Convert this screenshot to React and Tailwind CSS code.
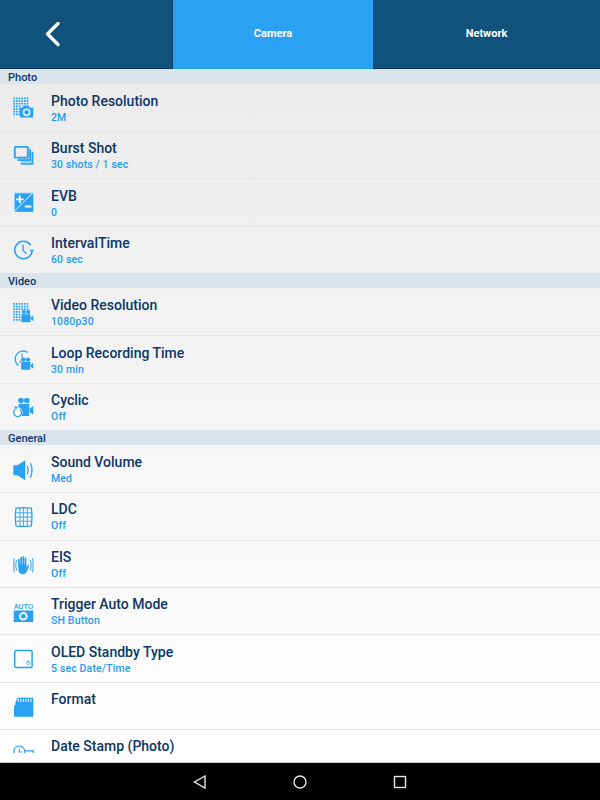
import React from 'react';

const BLUE = '#2ba1f3';

// dotted sensor grid used by the two resolution icons
const Grid = ({ x, y, rows }) => {
  const dots = [];
  for (let r = 0; r < rows; r++) {
    for (let c = 0; c < 6; c++) {
      if (r >= 3 && c >= 3) continue;
      dots.push(<rect key={`${r}-${c}`} x={x + c * 2.67} y={y + r * 2.67} width="1.7" height="1.7" fill={BLUE} />);
    }
  }
  return <>{dots}</>;
};

const MovieCam = ({ x, y, s = 1 }) => (
  <g transform={`translate(${x} ${y}) scale(${s})`} fill={BLUE}>
    <circle cx="3.2" cy="2.2" r="2.2" />
    <circle cx="7.8" cy="2.2" r="2.2" />
    <rect x="0.6" y="4.4" width="9.6" height="8.4" rx="0.5" />
    <path d="M10.6 7.6 13.2 5.4v6.4l-2.6-2z" />
  </g>
);

const icons = {
  photoRes: (
    <>
      <Grid x={0.3} y={1.5} rows={7} />
      <path fill={BLUE} fillRule="evenodd" d="M7 11.4h2.4l1.1-1.9h5l1.1 1.9h3.7v10.1H7zM13.6 12.4a3.9 3.9 0 1 0 0 7.8 3.9 3.9 0 0 0 0-7.8z" />
      <circle cx="13.6" cy="16.3" r="2.2" fill={BLUE} />
    </>
  ),
  burst: (
    <>
      <path d="M15 5h2.6v12.4H5V15H15z" fill="#9ed3f8" />
      <path d="M18 8h2v13H8v-3h10z" fill="#9ed3f8" />
      <rect x="1.8" y="3.8" width="13" height="10.8" rx="0.6" fill="none" stroke={BLUE} strokeWidth="1.8" />
      <path d="M17.2 6.5v10.6H4.5" fill="none" stroke={BLUE} strokeWidth="1.6" />
      <path d="M19.6 9v12H7.5" fill="none" stroke={BLUE} strokeWidth="1.6" />
    </>
  ),
  evb: (
    <>
      <rect x="1" y="2.5" width="19.3" height="19.3" fill="#a5d6f9" />
      <path fill={BLUE} d="M1.6 21.8 20.3 3.2v18.6z" />
      <path fill={BLUE} d="M1.9 3.4h16.4L1.9 20z" />
      <path fill="#fff" d="M5.8 5.6h1.9v2.8h2.8v1.9H7.7v2.8H5.8v-2.8H3V8.4h2.8zM11.8 15.6h6.6v1.9h-6.6z" />
    </>
  ),
  interval: (
    <>
      <path d="M19.2 12.6A8.7 8.7 0 1 1 17.2 6.4" fill="none" stroke={BLUE} strokeWidth="1.6" strokeLinecap="round" />
      <path d="M10 6.4v6l3.6 3.3" fill="none" stroke={BLUE} strokeWidth="1.4" />
      <path d="M16.4 11.8h4.6l-2.3 3z" fill={BLUE} />
    </>
  ),
  videoRes: (
    <>
      <Grid x={0.3} y={3} rows={7} />
      <MovieCam x={7.8} y={10} s={0.95} />
    </>
  ),
  loop: (
    <>
      <path d="M5.6 18.6A7.9 7.9 0 1 1 14.6 5.4" fill="none" stroke={BLUE} strokeWidth="1.3" />
      <path d="M9 6.6v6.2L6.2 15.6" fill="none" stroke={BLUE} strokeWidth="1.1" />
      <MovieCam x={7.6} y={10.5} s={0.95} />
    </>
  ),
  cyclic: (
    <>
      <g fill={BLUE}>
        <circle cx="8" cy="5.5" r="2.8" />
        <circle cx="13.8" cy="5.5" r="2.8" />
        <rect x="5.5" y="9" width="10.8" height="12" rx="0.5" />
        <path d="M16.8 13.4 20.3 11v8.6l-3.5-2.4z" />
      </g>
      <circle cx="4.6" cy="17.6" r="5" fill="#f7f7f7" />
      <path d="M2.2 14.6a3.9 3.9 0 1 0 4.8 0" fill="none" stroke={BLUE} strokeWidth="1.3" />
      <circle cx="3" cy="12.6" r="1.4" fill={BLUE} />
    </>
  ),
  sound: (
    <>
      <path fill={BLUE} d="M0.3 8.3h4L12.3 3.3v20l-8-5H0.3z" />
      <path d="M14.4 9.3c1.1 2.6 1.1 5.4 0 8M17.4 6.3c2 4.4 2 9.8 0 14.4" fill="none" stroke={BLUE} strokeWidth="1.3" />
    </>
  ),
  ldc: (
    <>
      <path d="M3 4.2c5-.7 10.3-.7 15.3 0 .8 5.1.8 12 0 17.6-5 .7-10.3.7-15.3 0-.8-5.6-.8-12.5 0-17.6z" fill="none" stroke={BLUE} strokeWidth="1.3" />
      <path d="M7 4v18M10.6 3.8v18.4M14.3 4v18M2.4 8.8h16.5M2.2 13h17M2.4 17.2h16.5" stroke={BLUE} strokeWidth="0.9" fill="none" />
    </>
  ),
  eis: (
    <>
      <path fill={BLUE} d="M6.4 13V7.4a.9.9 0 0 1 1.7 0V12h.5V5.4a.9.9 0 0 1 1.7 0V12h.5V4.7a.9.9 0 0 1 1.7 0V12h.5V6a.9.9 0 0 1 1.7 0v8.4c0 .5.4.6.7.2l.8-1.4c.5-.8 1.6-.2 1.2.7l-1.8 4.6c-.7 2-2.2 3.7-4.500 3.7-3 0-4.3-2-4.3-4.5z" transform="translate(-1.3 0)" />
      <path d="M3.7 8c-1.3 3.4-1.3 7.2 0 10.5M1.3 6.2c-.8 4.8-.8 9.2 0 14.2M17.2 8c1.3 3.4 1.3 7.2 0 10.5M19.5 6.2c.8 4.8.8 9.2 0 14.2" fill="none" stroke={BLUE} strokeWidth="1" />
    </>
  ),
  auto: (
    <>
      <text x="10.5" y="9.500" textAnchor="middle" fontSize="7.6" fontWeight="500" fill={BLUE} fontFamily="Roboto, sans-serif">AUTO</text>
      <path fill={BLUE} fillRule="evenodd" d="M0.7 11.6h19.6V23H0.7zM10.3 13a4.3 4.3 0 1 0 0 8.6 4.3 4.3 0 0 0 0-8.6z" />
      <circle cx="10.3" cy="17.3" r="2.4" fill={BLUE} />
    </>
  ),
  oled: (
    <>
      <rect x="1.7" y="4.4" width="17.4" height="17.2" rx="1.4" fill="none" stroke={BLUE} strokeWidth="1.5" />
      <circle cx="15.3" cy="16.9" r="1.7" fill="none" stroke={BLUE} strokeWidth="0.7" />
      <path d="M15.3 14.6v2.3" stroke={BLUE} strokeWidth="0.7" />
    </>
  ),
  format: (
    <>
      <path fill={BLUE} d="M1 22.8V12l1.4-1.6V8.600L4.5 3.8h15.8v19z" />
      <path stroke="#fff" strokeWidth="1.1" d="M5.4 5v2.8M7.9 5v2.8M10.4 5v2.8M12.9 5v2.8M15.4 5v2.8M17.9 5v2.8" fill="none" />
    </>
  ),
  stamp: (
    <>
      <circle cx="6.3" cy="10.5" r="5.4" fill="none" stroke={BLUE} strokeWidth="1.2" />
      <path d="M6.3 7.4v3.6h2.9" fill="none" stroke={BLUE} strokeWidth="1.1" />
      <path d="M12 9.8h8.3v5" fill="none" stroke={BLUE} strokeWidth="1.3" />
    </>
  ),
};

const sections = [
  {
    title: 'Photo',
    items: [
      { icon: 'photoRes', name: 'Photo Resolution', value: '2M' },
      { icon: 'burst', name: 'Burst Shot', value: '30 shots / 1 sec' },
      { icon: 'evb', name: 'EVB', value: '0' },
      { icon: 'interval', name: 'IntervalTime', value: '60 sec' },
    ],
  },
  {
    title: 'Video',
    items: [
      { icon: 'videoRes', name: 'Video Resolution', value: '1080p30' },
      { icon: 'loop', name: 'Loop Recording Time', value: '30 min' },
      { icon: 'cyclic', name: 'Cyclic', value: 'Off' },
    ],
  },
  {
    title: 'General',
    items: [
      { icon: 'sound', name: 'Sound Volume', value: 'Med' },
      { icon: 'ldc', name: 'LDC', value: 'Off' },
      { icon: 'eis', name: 'EIS', value: 'Off' },
      { icon: 'auto', name: 'Trigger Auto Mode', value: 'SH Button' },
      { icon: 'oled', name: 'OLED Standby Type', value: '5 sec Date/Time' },
      { icon: 'format', name: 'Format', value: '' },
      { icon: 'stamp', name: 'Date Stamp (Photo)', value: '', cut: true },
    ],
  },
];

// the last row runs under the nav bar: only the top of its icon is drawn
const SettingRow = ({ icon, name, value, cut }) => (
  <div className={`flex shrink-0 border-t border-[#e3e5e6] pl-[13px] first:border-transparent ${cut ? 'h-[33px]' : 'h-[47.4px]'}`}>
    <svg className={`mt-[11px] w-[24px] shrink-0 ${cut ? 'h-[12px]' : 'h-[24px]'}`} viewBox={cut ? '0 0 24 12' : '0 0 24 24'}>
      {icons[icon]}
    </svg>
    <div className="ml-[14px] flex flex-col pt-[7.2px]">
      <span className="text-[14px] leading-[18px] font-medium text-[#0c3768]">{name}</span>
      {value && <span className="mt-[1px] text-[10.5px] leading-[14px] font-medium tracking-[0.15px] text-[#1f9bf0]">{value}</span>}
    </div>
  </div>
);

const App = () => {
  return (
    <div className="flex h-[800px] w-[600px] flex-col overflow-hidden bg-black font-['Roboto',sans-serif]">
      {/* Top tabs */}
      <header className="flex h-[69px] shrink-0 bg-[#11527d]">
        <div className="flex w-[173px] items-center border-r border-b border-r-[#0e3d63] border-b-[#0b3563] pl-[44px]">
          <svg className="h-[26px] w-[18px]" viewBox="0 0 18 26" fill="none" stroke="#fff" strokeWidth="3.4" strokeLinecap="round" strokeLinejoin="round">
            <path d="M14 2.5 3.5 13 14 23.5" />
          </svg>
        </div>
        <div className="flex w-[200px] items-center justify-center bg-[#2ba1f3] text-[11px] font-bold text-white">Camera</div>
        <div className="flex flex-1 items-center justify-center border-b border-[#0b3563] text-[11px] font-bold text-white">Network</div>
      </header>

      {/* Settings list */}
      <main className="flex h-[694px] shrink-0 flex-col overflow-hidden border-b border-[#c9c9c9] bg-gradient-to-b from-[#ebebeb] to-white">
        {sections.map((section) => (
          <section key={section.title} className="flex shrink-0 flex-col">
            <div className="h-[14.7px] bg-[#d9e4ec] pl-[8px] text-[11px] leading-[17px] font-medium text-[#0c3768]">{section.title}</div>
            <div className="flex flex-col">
              {section.items.map((item) => (
                <SettingRow key={item.name} {...item} />
              ))}
            </div>
          </section>
        ))}
      </main>

      {/* Android nav bar */}
      <nav className="flex h-[37px] shrink-0 items-center justify-center">
        <div className="flex w-[216px] items-center justify-between">
          <svg className="h-[16px] w-[16px]" viewBox="0 0 16 16" fill="none" stroke="#e6e6e6" strokeWidth="1.4">
            <path d="M13 2 2.5 8 13 14z" />
          </svg>
          <svg className="h-[16px] w-[16px]" viewBox="0 0 16 16" fill="none" stroke="#e6e6e6" strokeWidth="1.4">
            <circle cx="8" cy="8" r="6" />
          </svg>
          <svg className="h-[16px] w-[16px]" viewBox="0 0 16 16" fill="none" stroke="#e6e6e6" strokeWidth="1.4">
            <rect x="2.5" y="2.5" width="11" height="11" />
          </svg>
        </div>
      </nav>
    </div>
  );
};

export default App;
